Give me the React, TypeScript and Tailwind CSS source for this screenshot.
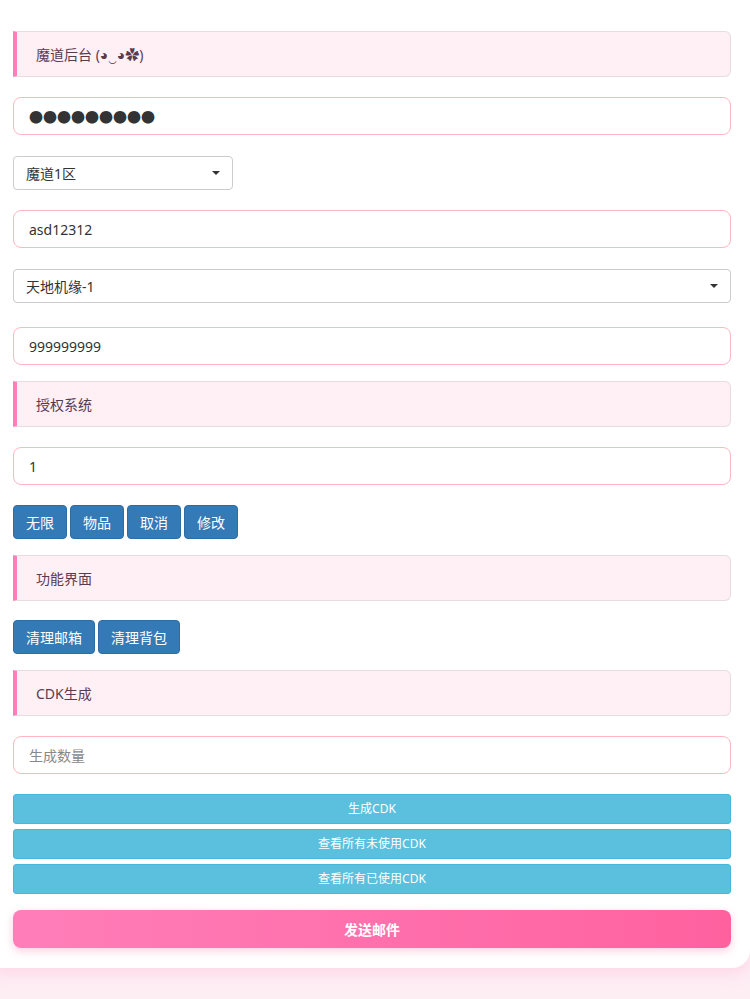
import React from "react";

const Header = ({ t, mt }: { t: string; mt: string }) => (
  <div className={`${mt} h-[46px] flex items-center pl-[19px] bg-[#fff0f6] border border-[#e6dce1] border-l-4 border-l-[#ff7eb9] rounded-r-[6px] text-[14px] text-[#5a3a4e]`}>{t}</div>
);
const Input = ({ v, mt, ph }: { v?: string; mt: string; ph?: string }) => (
  <div className={`${mt} h-[38px] flex items-center px-[15px] border border-[#ffb6c1] rounded-[8px] bg-white text-[14px] ${v ? "text-[#333]" : "text-[#888]"}`}>{v ?? ph}</div>
);
const Caret = () => <span className="w-0 h-0 border-l-[4px] border-r-[4px] border-t-[4px] border-l-transparent border-r-transparent border-t-[#333]" />;
const Blue = ({ t }: { t: string }) => (
  <div className="h-[34px] px-3 flex items-center bg-[#337ab7] border border-[#2e6da4] rounded-[4px] text-white text-[14px]">{t}</div>
);
const Cyan = ({ t, mt }: { t: string; mt: string }) => (
  <div className={`${mt} h-[30px] flex items-center justify-center bg-[#5bc0de] border border-[#46b8da] rounded-[3px] text-white text-[12px]`}>{t}</div>
);

export default function App() {
  return (
    <div className="min-h-[999px] bg-[#fdeef4] pb-[41px]" style={{ fontFamily: '"Noto Sans", "Noto Sans CJK SC", sans-serif' }}>
      <div className="bg-white rounded-br-[18px] px-[13px] pt-[31px] pb-[20px] shadow-[0_6px_14px_rgba(255,150,190,0.25)] mr-[1px] -ml-[6px] pl-[19px] pr-[19px] w-[756px]">
        <Header t="魔道后台 (◕‿◕✿)" mt="mt-0" />
        <Input v="●●●●●●●●●" mt="mt-[20px]" />
        <div className="mt-[21px] w-[220px] h-[34px] flex items-center justify-between pl-[12px] pr-[12px] border border-[#ccc] rounded-[4px] text-[14px] text-[#333]">魔道1区<Caret /></div>
        <Input v="asd12312" mt="mt-[20px]" />
        <div className="mt-[21px] h-[34px] flex items-center justify-between pl-[12px] pr-[12px] border border-[#ccc] rounded-[4px] text-[14px] text-[#333]">天地机缘-1<Caret /></div>
        <Input v="999999999" mt="mt-[24px]" />
        <Header t="授权系统" mt="mt-[16px]" />
        <Input v="1" mt="mt-[20px]" />
        <div className="mt-[20px] flex gap-[3px]"><Blue t="无限" /><Blue t="物品" /><Blue t="取消" /><Blue t="修改" /></div>
        <Header t="功能界面" mt="mt-[16px]" />
        <div className="mt-[19px] flex gap-[3px]"><Blue t="清理邮箱" /><Blue t="清理背包" /></div>
        <Header t="CDK生成" mt="mt-[16px]" />
        <Input ph="生成数量" mt="mt-[20px]" />
        <Cyan t="生成CDK" mt="mt-[20px]" />
        <Cyan t="查看所有未使用CDK" mt="mt-[5px]" />
        <Cyan t="查看所有已使用CDK" mt="mt-[5px]" />
        <div className="mt-[16px] h-[38px] flex items-center justify-center rounded-[8px] bg-gradient-to-r from-[#ff7eb9] to-[#ff619f] text-white font-bold text-[14px] shadow-[0_3px_8px_rgba(255,100,160,0.3)]">发送邮件</div>
      </div>
    </div>
  );
}
